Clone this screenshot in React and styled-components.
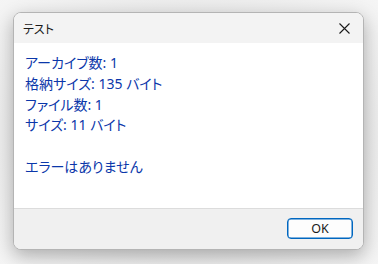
import React from 'react'
import styled, { createGlobalStyle } from 'styled-components'

const Global = createGlobalStyle`
  html, body {
    margin: 0;
    padding: 0;
    background: #f2f2f2;
  }
  body {
    font-family: "Segoe UI", "Noto Sans", "Noto Sans CJK JP", sans-serif;
  }
`

const Page = styled.div`
  width: 378px;
  height: 264px;
  padding: 12px 14px 14px 13px;
  box-sizing: border-box;
  background: radial-gradient(ellipse at center, #d6d6d6 0%, #ececec 70%, #f5f5f5 100%);
`

const Window = styled.div`
  display: flex;
  flex-direction: column;
  height: 238px;
  border: 1px solid #b4b4b4;
  border-radius: 8px;
  overflow: hidden;
  box-sizing: border-box;
  background: #fff;
  box-shadow: 0 6px 18px rgba(0, 0, 0, 0.28);
`

const TitleBar = styled.div`
  display: flex;
  align-items: center;
  justify-content: space-between;
  height: 30px;
  padding: 0 9px 0 9px;
  background: #f3f3f3;
  flex-shrink: 0;
`

const Title = styled.span`
  font-family: "Noto Sans CJK JP", sans-serif;
  font-feature-settings: "palt";
  font-size: 12px;
  color: #1a1a1a;
`

const Close = styled.button`
  display: flex;
  align-items: center;
  justify-content: center;
  width: 20px;
  height: 20px;
  padding: 0;
  margin-top: 1px;
  border: none;
  background: transparent;
`

const Content = styled.div`
  flex: 1;
  padding: 10px 11px;
  color: #0b37aa;
  font-family: "Noto Sans", "Noto Sans CJK JP", sans-serif;
  font-feature-settings: "palt";
  font-size: 14px;
  line-height: 20.8px;
`

const Line = styled.div`
  min-height: 20.8px;
  white-space: pre;
`

const Footer = styled.div`
  display: flex;
  justify-content: flex-end;
  align-items: flex-start;
  height: 41px;
  box-sizing: border-box;
  padding: 9px 10px 0;
  background: #f0f0f0;
  border-top: 1px solid #dcdcdc;
  flex-shrink: 0;
`

const Button = styled.button`
  width: 66px;
  height: 21px;
  box-sizing: border-box;
  border: 1px solid #0067c0;
  box-shadow: inset 0 0 0 0.5px #0067c0;
  border-radius: 4px;
  background: #fdfdfd;
  color: #1a1a1a;
  font-family: "Noto Sans", sans-serif;
  font-size: 12.5px;
  line-height: 17px;
  padding: 0;
`

const lines = [
  'アーカイブ数: 1',
  '格納サイズ: 135 バイト',
  'ファイル数: 1',
  'サイズ: 11 バイト',
  '',
  'エラーはありません',
]

export default function App() {
  return (
    <Page>
      <Global />
      <Window>
        <TitleBar>
          <Title>テスト</Title>
          <Close aria-label="閉じる">
            <svg width="11" height="11" viewBox="0 0 11 11">
              <path d="M0.5 0.5 L10.5 10.5 M10.5 0.5 L0.5 10.5" stroke="#1a1a1a" strokeWidth="1.1" fill="none" />
            </svg>
          </Close>
        </TitleBar>
        <Content>
          {lines.map((t, i) => (
            <Line key={i}>{t}</Line>
          ))}
        </Content>
        <Footer>
          <Button>OK</Button>
        </Footer>
      </Window>
    </Page>
  )
}
